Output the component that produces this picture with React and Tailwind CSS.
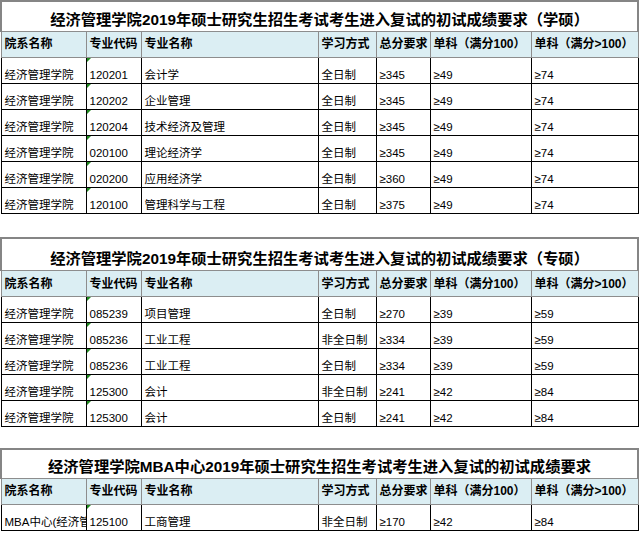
const cols = [85, 55, 177, 58, 54, 101, 107];

const headers = ["院系名称", "专业代码", "专业名称", "学习方式", "总分要求", "单科（满分100）", "单科（满分>100）"];

const tables = [
  {
    title: "经济管理学院2019年硕士研究生招生考试考生进入复试的初试成绩要求（学硕）",
    titleH: "h-[30px]",
    rows: [
      ["经济管理学院", "120201", "会计学", "全日制", "≥345", "≥49", "≥74"],
      ["经济管理学院", "120202", "企业管理", "全日制", "≥345", "≥49", "≥74"],
      ["经济管理学院", "120204", "技术经济及管理", "全日制", "≥345", "≥49", "≥74"],
      ["经济管理学院", "020100", "理论经济学", "全日制", "≥345", "≥49", "≥74"],
      ["经济管理学院", "020200", "应用经济学", "全日制", "≥360", "≥49", "≥74"],
      ["经济管理学院", "120100", "管理科学与工程", "全日制", "≥375", "≥49", "≥74"],
    ],
  },
  {
    title: "经济管理学院2019年硕士研究生招生考试考生进入复试的初试成绩要求（专硕）",
    titleH: "h-[33px]",
    rows: [
      ["经济管理学院", "085239", "项目管理", "全日制", "≥270", "≥39", "≥59"],
      ["经济管理学院", "085236", "工业工程", "非全日制", "≥334", "≥39", "≥59"],
      ["经济管理学院", "085236", "工业工程", "全日制", "≥334", "≥39", "≥59"],
      ["经济管理学院", "125300", "会计", "非全日制", "≥241", "≥42", "≥84"],
      ["经济管理学院", "125300", "会计", "全日制", "≥241", "≥42", "≥84"],
    ],
  },
  {
    title: "经济管理学院MBA中心2019年硕士研究生招生考试考生进入复试的初试成绩要求",
    titleH: "h-[29px]",
    // first cell is cut by the next column in the sheet
    rows: [["MBA中心(经济管", "125100", "工商管理", "非全日制", "≥170", "≥42", "≥84"]],
  },
];

const ScoreTable = ({ title, titleH, rows }) => (
  <table className="table-fixed border-collapse w-[637px]">
    <colgroup>
      {cols.map((w, i) => (
        <col key={i} style={{ width: w }} />
      ))}
    </colgroup>
    <tbody>
      {/* title row */}
      <tr className={titleH}>
        <td
          colSpan={7}
          className="border-2 border-b-0 border-[#858585] bg-white text-center align-bottom pb-[2px] text-[15.3px] leading-[18px] font-bold text-black whitespace-nowrap"
        >
          {title}
        </td>
      </tr>
      {/* header row */}
      <tr className="h-[26px] bg-[#dbeef3]">
        {headers.map((h, i) => (
          <td
            key={i}
            className="border border-[#8d8d8d] px-[3px] align-middle text-[12px] leading-[14px] font-bold text-black whitespace-nowrap overflow-hidden"
          >
            {h}
          </td>
        ))}
      </tr>
      {rows.map((r, ri) => (
        <tr key={ri} className="h-[26px] bg-white">
          {r.map((c, ci) => (
            <td
              key={ci}
              className="relative border border-black px-[3px] pb-[1px] align-bottom text-[11.5px] leading-[14px] text-black whitespace-nowrap overflow-hidden"
            >
              {ci === 1 && (
                <span className="absolute left-0 top-0 w-0 h-0 border-t-[4px] border-r-[4px] border-t-[#1f8a1f] border-r-transparent" />
              )}
              {c}
            </td>
          ))}
        </tr>
      ))}
    </tbody>
  </table>
);

const App = () => {
  return (
    <div className="w-[640px] h-[533px] overflow-hidden bg-white font-['Liberation_Sans','Noto_Sans_CJK_SC',sans-serif]">
      <div className="flex flex-col">
        <ScoreTable {...tables[0]} />
        <div className="h-[23px]"></div>
        <ScoreTable {...tables[1]} />
        <div className="h-[21px]"></div>
        <ScoreTable {...tables[2]} />
      </div>
    </div>
  );
};

export default App;
